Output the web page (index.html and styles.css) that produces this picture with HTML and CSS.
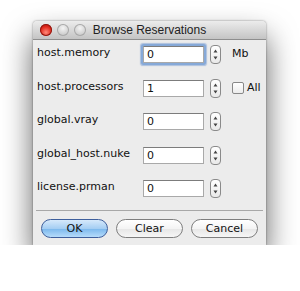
FILE: index.html
```html
<!DOCTYPE html>
<html>
<head>
<meta charset="utf-8">
<link rel="stylesheet" href="styles.css">
</head>
<body>
<div class="window">
  <div class="titlebar">
    <div class="lights">
      <span class="light close"></span>
      <span class="light"></span>
      <span class="light"></span>
    </div>
    <div class="title">Browse Reservations</div>
  </div>
  <div class="form">
    <div class="label">host.memory</div>
    <div class="field focus">0</div>
    <div class="stepper"><svg width="11" height="19" viewBox="0 0 11 19"><path d="M3.5 7.5 L5.5 4.5 L7.5 7.5 Z M3.5 11.5 L5.5 14.5 L7.5 11.5 Z" fill="#444"/></svg></div>
    <div class="extra">Mb</div>

    <div class="label">host.processors</div>
    <div class="field">1</div>
    <div class="stepper"><svg width="11" height="19" viewBox="0 0 11 19"><path d="M3.5 7.5 L5.5 4.5 L7.5 7.5 Z M3.5 11.5 L5.5 14.5 L7.5 11.5 Z" fill="#444"/></svg></div>
    <div class="extra check"><span class="box"></span>All</div>

    <div class="label">global.vray</div>
    <div class="field">0</div>
    <div class="stepper"><svg width="11" height="19" viewBox="0 0 11 19"><path d="M3.5 7.5 L5.5 4.5 L7.5 7.5 Z M3.5 11.5 L5.5 14.5 L7.5 11.5 Z" fill="#444"/></svg></div>
    <div class="extra"></div>

    <div class="label">global_host.nuke</div>
    <div class="field">0</div>
    <div class="stepper"><svg width="11" height="19" viewBox="0 0 11 19"><path d="M3.5 7.5 L5.5 4.5 L7.5 7.5 Z M3.5 11.5 L5.5 14.5 L7.5 11.5 Z" fill="#444"/></svg></div>
    <div class="extra"></div>

    <div class="label">license.prman</div>
    <div class="field">0</div>
    <div class="stepper"><svg width="11" height="19" viewBox="0 0 11 19"><path d="M3.5 7.5 L5.5 4.5 L7.5 7.5 Z M3.5 11.5 L5.5 14.5 L7.5 11.5 Z" fill="#444"/></svg></div>
    <div class="extra"></div>
  </div>
  <div class="sep"></div>
  <div class="buttons">
    <div class="btn default">OK</div>
    <div class="btn">Clear</div>
    <div class="btn">Cancel</div>
  </div>
</div>
</body>
</html>
```
FILE: styles.css
```css
html, body {
  margin: 0;
  padding: 0;
  background: #ffffff;
}
body {
  font-family: "DejaVu Sans", "Liberation Sans", sans-serif;
  font-size: 11px;
  color: #111;
}
.window {
  width: 233px;
  height: 224px;
  margin: 21px 0 0 33px;
  background: #ececec;
  border-radius: 4px 4px 0 0;
  box-shadow: 0 16px 30px rgba(0, 0, 0, 0.62), 0 0 2px rgba(0,0,0,0.5);
  display: flex;
  flex-direction: column;
}
.titlebar {
  height: 18px;
  border-radius: 4px 4px 0 0;
  background: linear-gradient(#ececec, #c4c4c4);
  border-bottom: 1px solid #8e8e8e;
  display: flex;
  align-items: center;
  position: relative;
}
.lights {
  display: flex;
  gap: 5px;
  margin-left: 7px;
  position: relative;
  z-index: 1;
}
.light {
  width: 12px;
  height: 12px;
  border-radius: 50%;
  background: radial-gradient(circle at 50% 35%, #f4f4f4, #cbcbcb 70%, #b4b4b4);
  box-shadow: inset 0 0 0 1px #a9a9a9;
}
.light.close {
  background: radial-gradient(circle at 50% 70%, #ff8a7a, #e0281c 55%, #9a0c05);
  box-shadow: inset 0 0 0 1px #8e1a12;
}
.title {
  position: absolute;
  left: 0;
  right: 0;
  top: 0;
  line-height: 18px;
  text-align: center;
  font-family: "Liberation Sans", "DejaVu Sans", sans-serif;
  font-size: 12px;
  color: #222;
}
.form {
  display: grid;
  grid-template-columns: 106px 61px 28px auto;
  grid-auto-rows: 17px;
  row-gap: 16.5px;
  padding: 6px 0 0 4px;
  align-items: start;
}
.label {
  line-height: 14px;
  white-space: nowrap;
}
.field {
  box-sizing: border-box;
  height: 17px;
  background: #fff;
  border: 1px solid #a9a9a9;
  border-top-color: #7c7c7c;
  padding-left: 3px;
  line-height: 15px;
}
.field.focus {
  box-shadow: 0 0 0 2px #86a9d8, 0 0 1px 3px rgba(110, 150, 210, 0.5);
  border-radius: 1px;
}
.stepper {
  margin: -1px 0 0 6px;
  width: 11px;
  height: 19px;
  box-sizing: border-box;
  border: 1px solid #8a8a8a;
  border-radius: 4px;
  background: linear-gradient(#ffffff, #e9e9e9);
  display: flex;
}
.stepper svg {
  margin: -1px;
}
.extra {
  line-height: 14px;
  margin-top: 1px;
}
.check {
  display: flex;
  align-items: center;
  gap: 3px;
}
.box {
  width: 10px;
  height: 10px;
  border: 1px solid #888;
  border-radius: 2px;
  background: linear-gradient(#fff, #ececec);
}
.sep {
  margin: auto 3px 0 3px;
  height: 1px;
  background: #a8a8a8;
}
.buttons {
  display: flex;
  gap: 8px;
  padding: 8px 0 7px 8px;
}
.btn {
  box-sizing: border-box;
  width: 67px;
  height: 19px;
  border-radius: 10px;
  border: 1px solid #7e7e7e;
  background: linear-gradient(#ffffff, #f4f4f4 50%, #e6e6e6 51%, #f6f6f6);
  text-align: center;
  line-height: 17px;
  color: #111;
}
.btn.default {
  border-color: #3e5f9c;
  background: linear-gradient(#d6e9fb, #a5cef3 50%, #7ab7ec 51%, #b6dcfb);
}
```
